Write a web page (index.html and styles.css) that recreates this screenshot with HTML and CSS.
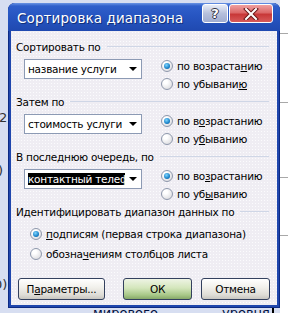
FILE: index.html
```html
<!DOCTYPE html>
<html>
<head>
  <title>Сортировка диапазона</title>
  <link rel="stylesheet" href="styles.css">
</head>
<body>
  <div class="screen">
    <!-- spreadsheet behind the dialog -->
    <div class="sheet">
      <div class="sheet-right"></div>
      <span class="frag f-two">2</span>
      <span class="frag f-par">)</span>
      <span class="frag f-zero">0)</span>
      <span class="frag f-world">мирового</span>
      <span class="frag f-level">уровня</span>
      <span class="sheet-bar"></span>
    </div>

    <div class="dialog">
      <div class="titlebar">
        <span class="title">Сортировка диапазона</span>
        <div class="caption-buttons">
          <span class="cap-btn help">?</span>
          <span class="cap-btn close">
            <svg width="16" height="12" viewBox="0 0 16 12">
              <path d="M3 1 L13 11 M13 1 L3 11" stroke="#6a1a1a" stroke-width="4" stroke-linecap="square"/>
              <path d="M3 1 L13 11 M13 1 L3 11" stroke="#fff" stroke-width="2" stroke-linecap="square"/>
            </svg>
          </span>
        </div>
      </div>

      <div class="client">
        <div class="group">
          <div class="group-label"><span>Сортировать по</span></div>
          <div class="group-body">
            <div class="combo"><span class="combo-text">название услуги</span><span class="arrow"></span></div>
            <div class="radios">
              <div class="radio checked"><span class="dot"></span>по возраста<u>н</u>ию</div>
              <div class="radio"><span class="dot"></span>по убывани<u>ю</u></div>
            </div>
          </div>
        </div>

        <div class="group">
          <div class="group-label"><span>Затем по</span></div>
          <div class="group-body">
            <div class="combo"><span class="combo-text">стоимость услуги</span><span class="arrow"></span></div>
            <div class="radios">
              <div class="radio checked"><span class="dot"></span>по в<u>о</u>зрастанию</div>
              <div class="radio"><span class="dot"></span>по у<u>б</u>ыванию</div>
            </div>
          </div>
        </div>

        <div class="group">
          <div class="group-label"><span>В последнюю очередь, по</span></div>
          <div class="group-body">
            <div class="combo"><span class="combo-text selected">контактный телефон</span><span class="arrow"></span></div>
            <div class="radios">
              <div class="radio checked"><span class="dot"></span>по во<u>з</u>растанию</div>
              <div class="radio"><span class="dot"></span>по уб<u>ы</u>ванию</div>
            </div>
          </div>
        </div>

        <div class="group">
          <div class="group-label"><span>Идентифицировать диапазон данных по</span></div>
          <div class="range-options">
            <div class="radio checked"><span class="dot"></span><u>п</u>одписям (первая строка диапазона)</div>
            <div class="radio"><span class="dot"></span>обозна<u>ч</u>ениям столбцов листа</div>
          </div>
        </div>

        <div class="buttons">
          <span class="btn btn-params">П<u>а</u>раметры...</span>
          <span class="btn btn-ok">ОК</span>
          <span class="btn btn-cancel">Отмена</span>
        </div>
      </div>
    </div>
  </div>
</body>
</html>
```

FILE: styles.css
```css
body {
  margin: 0;
  font-family: "DejaVu Sans", sans-serif;
  font-size: 10.5px;
  letter-spacing: -0.25px;
  color: #000;
}
.screen {
  position: relative;
  width: 288px;
  height: 313px;
  overflow: hidden;
  background: #d7def1;
}

/* sheet behind */
.sheet {
  position: absolute;
  left: 0;
  top: 0;
  right: 0;
  bottom: 0;
}
.sheet-right {
  position: absolute;
  left: 280px;
  top: 0;
  right: 0;
  bottom: 0;
  background: #fff;
  background-image:
    linear-gradient(#a8a8a8, #a8a8a8),
    linear-gradient(#a8a8a8, #a8a8a8),
    linear-gradient(#a8a8a8, #a8a8a8),
    linear-gradient(#a8a8a8, #a8a8a8);
  background-size: 100% 1px;
  background-repeat: no-repeat;
  background-position: 0 33px, 0 102px, 0 177px, 0 235px;
}
.frag {
  position: absolute;
  font-size: 13px;
  letter-spacing: 0;
  color: #333;
}
.f-two { left: -1px; top: 110px; }
.f-par { left: -2px; top: 163px; }
.f-zero { left: -6px; top: 277px; }
.f-world { left: 93px; top: 305px; color: #001040; }
.f-level { left: 222px; top: 305px; color: #001040; }
.sheet-bar {
  position: absolute;
  left: 272px;
  top: 305px;
  width: 2px;
  height: 8px;
  background: #000;
}

/* dialog window */
.dialog {
  position: relative;
  width: 272px;
  margin: 3px 0 0 8px;
  padding-bottom: 3px;
  border-radius: 7px 7px 0 0;
  background: #1f46ad;
  box-shadow: inset 1px 0 #0d2a84, inset -1px 0 #0d2a84, inset 0 -1px #0d2a84;
}
.titlebar {
  display: flex;
  justify-content: space-between;
  height: 28px;
  padding: 0 7px 0 9px;
  border-radius: 7px 7px 0 0;
  background: linear-gradient(#6a94e4 0, #2f5fcb 3px, #2654c0 50%, #1f49b0 100%);
}
.title {
  margin-top: 7px;
  font-size: 13.5px;
  letter-spacing: 0.1px;
  color: #fff;
  text-shadow: 1px 1px #10307a;
}
.caption-buttons {
  display: flex;
  margin-top: 1px;
}
.cap-btn {
  display: flex;
  align-items: center;
  justify-content: center;
  height: 17px;
  border: 1px solid #fff;
  border-radius: 3px;
}
.help {
  width: 24px;
  margin-right: 1px;
  background: linear-gradient(#e8ecf6, #b6c0dc 50%, #a0acd0);
  font-weight: bold;
  font-size: 13px;
  color: #fff;
  text-shadow: 1px 0 #334, -1px 0 #334, 0 1px #334, 0 -1px #334;
}
.close {
  width: 42px;
  background: linear-gradient(#f0a0a0, #dc6868 45%, #c83838 55%, #d85a5a);
}

.client {
  height: 274px;
  margin: 0 3px;
  padding: 9px 0 0 5px;
  box-sizing: border-box;
  background-color: #efedf3;
  background-image: radial-gradient(#fbfbfd 0.6px, transparent 0.9px);
  background-size: 3px 3px;
}

/* groups */
.group {
  margin-bottom: 2px;
}
.group-label {
  display: flex;
  align-items: center;
  height: 13px;
  margin-right: 8px;
}
.group-label::after {
  content: "";
  flex: 1;
  margin-left: 6px;
  border-top: 1px solid #cfd6e6;
}
.group-body {
  display: flex;
  height: 36px;
  margin-top: 4px;
}
.combo {
  display: flex;
  align-items: center;
  justify-content: space-between;
  width: 118px;
  height: 20px;
  margin: 2px 0 0 8px;
  padding: 0 4px 0 3px;
  box-sizing: border-box;
  border: 1px solid #8c9ab4;
  background: #fff;
  overflow: hidden;
}
.combo-text {
  white-space: nowrap;
  overflow: hidden;
}
.combo-text.selected {
  width: 98px;
  background: #000;
  color: #fff;
}
.arrow {
  flex: none;
  width: 0;
  height: 0;
  margin-left: 4px;
  border-left: 4px solid transparent;
  border-right: 4px solid transparent;
  border-top: 4px solid #000;
}
.radios {
  margin-left: 19px;
}
.radio {
  display: flex;
  align-items: center;
  height: 18px;
  white-space: nowrap;
}
.dot {
  flex: none;
  position: relative;
  width: 12px;
  height: 12px;
  margin-right: 4px;
  box-sizing: border-box;
  border: 1px solid #8e98ac;
  border-radius: 50%;
  background: radial-gradient(circle at 35% 30%, #fff 20%, #d8d8dc 90%);
}
.radio.checked .dot::after {
  content: "";
  position: absolute;
  left: 2px;
  top: 2px;
  width: 6px;
  height: 6px;
  border-radius: 50%;
  background: radial-gradient(circle at 40% 35%, #7fd6ff, #1a82c8 60%, #0c4a86);
}
.range-options {
  margin: 6px 0 0 14px;
}
.range-options .radio {
  height: 20px;
}

/* buttons */
.buttons {
  display: flex;
  margin-top: 14px;
}
.btn {
  display: flex;
  align-items: center;
  justify-content: center;
  height: 22px;
  box-sizing: border-box;
  border: 1px solid #33405e;
  border-radius: 3px;
  background: linear-gradient(#ffffff, #f2f1ec 40%, #dedcd6 80%, #c8c6c0);
}
.btn-params {
  width: 87px;
  margin-left: 2px;
}
.btn-ok {
  width: 69px;
  margin-left: 18px;
  background: linear-gradient(#eef4e4, #d4e6bc 45%, #a8c888 80%, #86a868);
}
.btn-cancel {
  width: 69px;
  margin-left: 9px;
}
```
